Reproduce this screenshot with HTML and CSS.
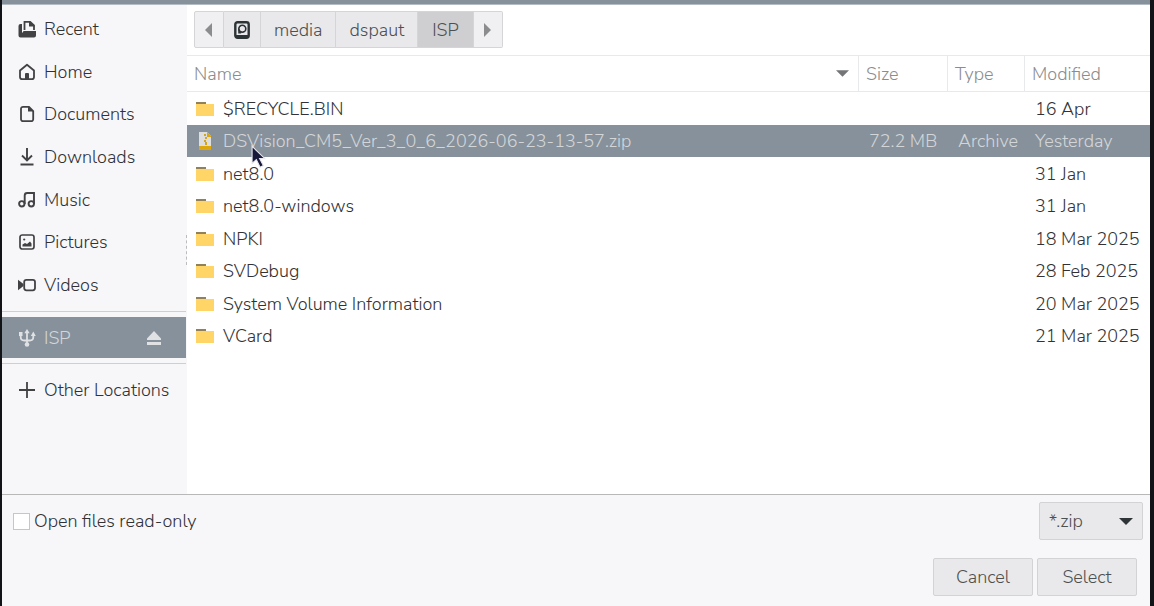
FILE: index.html
```html
<!DOCTYPE html>
<html lang="en">
<head>
<meta charset="utf-8">
<meta name="viewport" content="width=device-width, initial-scale=1">
<title>Open File</title>
<link rel="stylesheet" href="styles.css">
</head>
<body>
<main class="dialog">
  <div class="content">
    <nav class="sidebar" aria-label="Places">
      <a class="place" href="#recent"><svg class="icon" viewBox="0 0 18 18"><path d="M6.500 10V1.800h5.700L16 5.500V10" fill="none" stroke="currentColor" stroke-width="1.800"/><path d="M11 1v5.500h6zM6 11h12v4.500a2 2 0 0 1-2 2H2.500a2 2 0 0 1-2-2V6a2 2 0 0 1 2-2h1.500v8.500h1V12a1 1 0 0 1 1-1z" fill="currentColor"/></svg>Recent</a>
      <a class="place" href="#home"><svg class="icon" viewBox="0 0 18 18"><path d="M2 7.500 9 1.800l7 5.700V14a2.200 2.200 0 0 1-2.200 2.200H4.200A2.200 2.200 0 0 1 2 14z" fill="none" stroke="currentColor" stroke-width="1.800" stroke-linejoin="round"/><path d="M7 17v-6q0-1 1-1h2q1 0 1 1v6z" fill="currentColor"/></svg>Home</a>
      <a class="place" href="#documents"><svg class="icon" viewBox="0 0 18 18"><path d="M5 1.800h6L15.200 6v8.200a2 2 0 0 1-2 2H5a2 2 0 0 1-2-2V3.800a2 2 0 0 1 2-2z" fill="none" stroke="currentColor" stroke-width="1.800"/><path d="M10 1.500v5h5.500z" fill="currentColor"/></svg>Documents</a>
      <a class="place" href="#downloads"><svg class="icon" viewBox="0 0 18 18"><path d="M9 0v12M4 7.500l5 5 5-5M2.500 16.500h13" fill="none" stroke="currentColor" stroke-width="1.900"/></svg>Downloads</a>
      <a class="place" href="#music"><svg class="icon" viewBox="0 0 18 18"><g fill="none" stroke="currentColor" stroke-width="1.900"><circle cx="3.800" cy="12.800" r="2.700"/><circle cx="13.300" cy="12.800" r="2.700"/><path d="M6.700 13V4.500a2.500 2.500 0 0 1 2.500-2.500H16v11"/></g></svg>Music</a>
      <a class="place" href="#pictures"><svg class="icon" viewBox="0 0 18 18"><rect x="2" y="2" width="14" height="14" rx="2.200" fill="none" stroke="currentColor" stroke-width="1.700"/><path d="M4.500 13.500v-2L7 10l2 1 3-2.500 1.500 2v3z" fill="currentColor"/><circle cx="6.200" cy="6.500" r="1.100" fill="currentColor"/></svg>Pictures</a>
      <a class="place" href="#videos"><svg class="icon" viewBox="0 0 18 18"><rect x="6.200" y="3.900" width="10.800" height="10.400" rx="2.200" fill="none" stroke="currentColor" stroke-width="1.800"/><path d="M0 3.800 5.500 8v2L0 14.200z" fill="currentColor"/></svg>Videos</a>
      <div class="drive">
        <a class="place place-active" href="#isp"><svg class="icon" viewBox="0 0 18 18"><path d="M9 2v14M2.700 5v3q0 3.500 3.500 3.500h5.600q3.500 0 3.500-3.500V5" fill="none" stroke="currentColor" stroke-width="1.800"/><path d="M9 0l2.700 4.200H6.300zM1 3h3.500v4H1zM15.300 2.500 17.800 7h-5z" fill="currentColor"/><circle cx="9" cy="15.500" r="2.300" fill="currentColor"/></svg>ISP</a>
        <button class="eject" type="button" aria-label="Eject ISP"><svg viewBox="0 0 16 16"><path d="M8 1 15 8.500V10H1V8.500zM1 12h14v3H1z" fill="currentColor"/></svg></button>
      </div>
      <a class="place place-other" href="#other"><svg class="icon" viewBox="0 0 18 18"><path d="M9 1v16M1 9h16" stroke="currentColor" stroke-width="1.800"/></svg>Other Locations</a>
      <span class="grip"></span>
    </nav>
    <section class="browser">
      <div class="pathbar">
        <button class="crumb crumb-arrow" type="button" aria-label="Back"><svg viewBox="0 0 8 14"><path d="M7 0v14L0 7z" fill="currentColor"/></svg></button>
        <button class="crumb crumb-disk" type="button" aria-label="File system"><svg viewBox="0 0 18 20"><rect x="2.300" y="2.200" width="13.400" height="15.600" rx="2.200" fill="none" stroke="currentColor" stroke-width="2.400"/><path d="M3 15h12v3H3z" fill="currentColor"/><path d="M5.200 13.500V9h3v4.500z" fill="currentColor"/><circle cx="9.300" cy="8.800" r="3.400" fill="none" stroke="currentColor" stroke-width="1.800"/><circle cx="9.300" cy="8.800" r="2.500" fill="#e9e9eb"/></svg></button>
        <button class="crumb" type="button">media</button>
        <button class="crumb" type="button">dspaut</button>
        <button class="crumb crumb-current" type="button">ISP</button>
        <button class="crumb crumb-arrow" type="button" aria-label="Forward"><svg viewBox="0 0 8 14"><path d="M0 0v14l7-7z" fill="currentColor"/></svg></button>
      </div>
      <table class="files">
        <colgroup><col><col class="col-size"><col class="col-type"><col class="col-modified"></colgroup>
        <thead>
          <tr><th><span class="sort">Name<svg viewBox="0 0 14 8"><path d="M0 0h14L7 7z" fill="currentColor"/></svg></span></th><th>Size</th><th>Type</th><th>Modified</th></tr>
        </thead>
        <tbody>
          <tr><td><span class="file"><i class="folder"></i>$RECYCLE.BIN</span></td><td></td><td></td><td>16 Apr</td></tr>
          <tr class="selected"><td><span class="file"><svg class="archive" viewBox="0 0 18 18"><path d="M3 0h8l4 4v10H3z" fill="#dedede"/><path d="M11 0l4 4v1h-4zM3 14h12v4H3z" fill="#dba70c"/><path d="M8 2h2v2H8zm1 3h2v2H9zM8 8h2v2H8zm1 2h2v3H9z" fill="#d1a51d"/></svg>DSVision_CM5_Ver_3_0_6_2026-06-23-13-57.zip</span><svg class="pointer" viewBox="0 0 14 22"><path d="M1 1v16l4-3.500 3.500 7 3-1.500-3.500-6.500H13z" fill="#17173a" stroke="#e8e9ee" stroke-width="1"/></svg></td><td>72.2 MB</td><td>Archive</td><td>Yesterday</td></tr>
          <tr><td><span class="file"><i class="folder"></i>net8.0</span></td><td></td><td></td><td>31 Jan</td></tr>
          <tr><td><span class="file"><i class="folder"></i>net8.0-windows</span></td><td></td><td></td><td>31 Jan</td></tr>
          <tr><td><span class="file"><i class="folder"></i>NPKI</span></td><td></td><td></td><td>18 Mar 2025</td></tr>
          <tr><td><span class="file"><i class="folder"></i>SVDebug</span></td><td></td><td></td><td>28 Feb 2025</td></tr>
          <tr><td><span class="file"><i class="folder"></i>System Volume Information</span></td><td></td><td></td><td>20 Mar 2025</td></tr>
          <tr><td><span class="file"><i class="folder"></i>VCard</span></td><td></td><td></td><td>21 Mar 2025</td></tr>
        </tbody>
      </table>
    </section>
  </div>
  <footer class="footer">
    <div class="options">
      <label class="readonly"><input type="checkbox">Open files read-only</label>
      <div class="filter"><select aria-label="File type"><option>*.zip</option></select></div>
    </div>
    <div class="actions">
      <button class="button" type="button">Cancel</button>
      <button class="button" type="button">Select</button>
    </div>
  </footer>
</main>
</body>
</html>
```

FILE: styles.css
```css
* { box-sizing: border-box; }
body {
  margin: 0;
  background: #f7f7fa;
  color: #323234;
  font: 300 18px/24px "Nunito Sans", Nunito, Lato, sans-serif;
}
button, select, input { font: inherit; color: inherit; margin: 0; }
button { padding: 0; }
svg { display: block; flex: none; }

.dialog {
  display: flex;
  flex-direction: column;
  min-height: 100vh;
  border: solid #121316;
  border-width: 0 4px 0 2px;
}
.dialog::before {
  content: "";
  flex: none;
  height: 4px;
  background: #87919b;
  border-bottom: 1px solid #b5bbc2;
}
.content { display: flex; flex: 1; border-bottom: 1px solid #b8b8b8; }

.sidebar { position: relative; width: 185px; padding-top: 2px; background: #f7f7fa; }
.place {
  display: flex;
  align-items: center;
  gap: 8px;
  height: 43px;
  padding-left: 16px;
  color: inherit;
  text-decoration: none;
}
.place:nth-child(3n) { height: 42px; }
.icon { width: 18px; height: 18px; color: #424244; }
.drive {
  display: flex;
  align-items: center;
  margin: 5px 1px 0 0;
  padding: 5px 0;
  border: solid #cfcfd2;
  border-width: 1px 0;
}
.place-active { flex: 1; height: 41px; color: #d3d6d9; background: #87919b; }
.place-active .icon { color: #dfe1e3; }
.eject {
  height: 41px;
  padding-right: 24px;
  border: 0;
  color: #dfe1e3;
  background: #87919b;
}
.eject svg { width: 16px; height: 16px; }
.sidebar .place-other { height: 52px; }
.grip {
  position: absolute;
  right: 0;
  top: 230px;
  height: 30px;
  border-right: 1px dashed #bcbcc0;
}

.browser { flex: 1; min-width: 0; background: #fff; }
.pathbar { display: flex; padding: 6px 7px 7px; }
.crumb {
  height: 37px;
  padding: 0 13px;
  border: 1px solid #d5d5d7;
  border-left-width: 0;
  color: #4d5052;
  background: #e9e9eb;
}
.crumb:first-child { border-left-width: 1px; border-radius: 2px 0 0 2px; }
.crumb:last-child { border-radius: 0 2px 2px 0; }
.crumb-arrow { padding: 0 10px; color: #8a8c8e; background: #f0f0f3; }
.crumb-arrow svg { width: 8px; height: 14px; }
.crumb-disk { padding: 0 9px; color: #2c3335; }
.crumb-disk svg { width: 18px; height: 20px; }
.crumb-current { padding: 0 14px; background: #cfcfd1; }

.files { width: 100%; table-layout: fixed; border-collapse: separate; border-spacing: 0; }
.col-size { width: 89px; }
.col-type { width: 77px; }
.col-modified { width: 126px; }
.files th {
  height: 37px;
  padding: 0 7px;
  border: solid #e7e9ea;
  border-width: 1px 0 1px 1px;
  color: #8c8c8e;
  font-weight: 300;
  text-align: left;
}
.files th:first-child { border-left: 0; }
.sort { display: flex; align-items: center; justify-content: space-between; padding-right: 2px; }
.sort svg { width: 13px; height: 8px; color: #737577; }
.files td { position: relative; height: 32px; padding: 0 0 0 11px; white-space: nowrap; }
.files td:first-child { padding-left: 9px; }
.files tbody tr:nth-child(odd) td { height: 33px; }
.file { display: flex; align-items: center; gap: 9px; }
.folder {
  width: 18px;
  height: 14px;
  border-top: 2px solid transparent;
  background:
    linear-gradient(#91815a, #91815a) 0 0 / 10px 2px no-repeat border-box,
    linear-gradient(#ffd567, #ffd567) padding-box;
}
.archive { width: 18px; height: 18px; }
.files .selected td { color: #d3d6d9; background: #87919b; }
.pointer { position: absolute; z-index: 1; left: 64px; top: 20px; width: 15px; height: 24px; }

.footer { padding: 7px 7px 10px 11px; }
.options, .actions { display: flex; align-items: center; }
.options { justify-content: space-between; margin-bottom: 18px; }
.readonly { display: flex; align-items: center; gap: 4px; }
.readonly input {
  appearance: none;
  width: 17px;
  height: 17px;
  border: 1px solid #c6c6c8;
  background: #fff;
}
.filter { position: relative; }
.filter select {
  display: block;
  appearance: none;
  width: 104px;
  height: 38px;
  padding: 0 9px;
}
.filter::after {
  content: "";
  position: absolute;
  right: 10px;
  top: 16px;
  border: solid transparent;
  border-width: 7px 7px 0;
  border-top-color: #2f3436;
  pointer-events: none;
}
.filter select, .button {
  border: 1px solid #d3d3d5;
  border-radius: 2px;
  color: #4d5052;
  background: #e9e9eb;
}
.actions { justify-content: flex-end; gap: 4px; padding-right: 6px; }
.button { width: 100px; height: 38px; }
```
